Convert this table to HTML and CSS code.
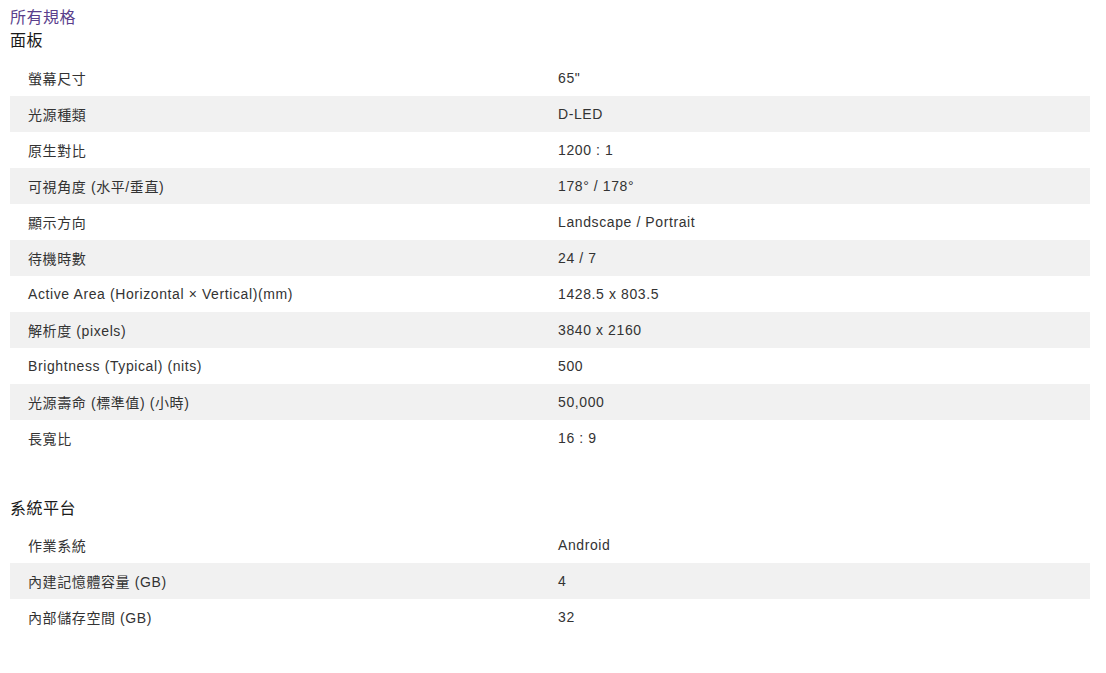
FILE: index.html
```html
<!DOCTYPE html>
<html lang="zh-Hant">
<head>
<meta charset="utf-8">
<title>所有規格</title>
<link rel="stylesheet" href="styles.css">
</head>
<body>
<div class="page">
  <div class="title">所有規格</div>
  <section class="group">
    <h2 class="group-title">面板</h2>
    <div class="specs">
      <div class="row"><div class="k">螢幕尺寸</div><div class="v">65"</div></div>
      <div class="row"><div class="k">光源種類</div><div class="v">D-LED</div></div>
      <div class="row"><div class="k">原生對比</div><div class="v">1200 : 1</div></div>
      <div class="row"><div class="k">可視角度 (水平/垂直)</div><div class="v">178° / 178°</div></div>
      <div class="row"><div class="k">顯示方向</div><div class="v">Landscape / Portrait</div></div>
      <div class="row"><div class="k">待機時數</div><div class="v">24 / 7</div></div>
      <div class="row"><div class="k">Active Area (Horizontal × Vertical)(mm)</div><div class="v">1428.5 x 803.5</div></div>
      <div class="row"><div class="k">解析度 (pixels)</div><div class="v">3840 x 2160</div></div>
      <div class="row"><div class="k">Brightness (Typical) (nits)</div><div class="v">500</div></div>
      <div class="row"><div class="k">光源壽命 (標準值) (小時)</div><div class="v">50,000</div></div>
      <div class="row"><div class="k">長寬比</div><div class="v">16 : 9</div></div>
    </div>
  </section>
  <section class="group second">
    <h2 class="group-title">系統平台</h2>
    <div class="specs">
      <div class="row"><div class="k">作業系統</div><div class="v">Android</div></div>
      <div class="row"><div class="k">內建記憶體容量 (GB)</div><div class="v">4</div></div>
      <div class="row"><div class="k">內部儲存空間 (GB)</div><div class="v">32</div></div>
    </div>
  </section>
</div>
</body>
</html>
```
FILE: styles.css
```css
html, body {
  margin: 0;
  padding: 0;
  background: #fff;
}
body {
  font-family: "Liberation Sans", Arial, "Noto Sans CJK TC", sans-serif;
  color: #333;
}
.page {
  padding: 8px 16px 0 10px;
  width: 1080px;
}
.title {
  font-size: 16px;
  line-height: 20px;
  letter-spacing: 0.5px;
  color: #5b3f8c;
}
.group-title {
  margin: 3px 0 0;
  font-size: 16px;
  font-weight: normal;
  line-height: 20px;
  letter-spacing: 0.5px;
  color: #1a1a1a;
}
.second {
  margin-top: 43px;
}
.second .specs {
  margin-top: 8px;
}
.specs {
  margin-top: 9px;
  display: flex;
  flex-direction: column;
}
.row {
  display: grid;
  grid-template-columns: 530px 1fr;
  height: 36px;
  align-items: center;
  font-size: 14px;
  letter-spacing: 0.6px;
}
.row:nth-child(even) {
  background: #f1f1f1;
}
.k, .v {
  padding-left: 18px;
}
```
